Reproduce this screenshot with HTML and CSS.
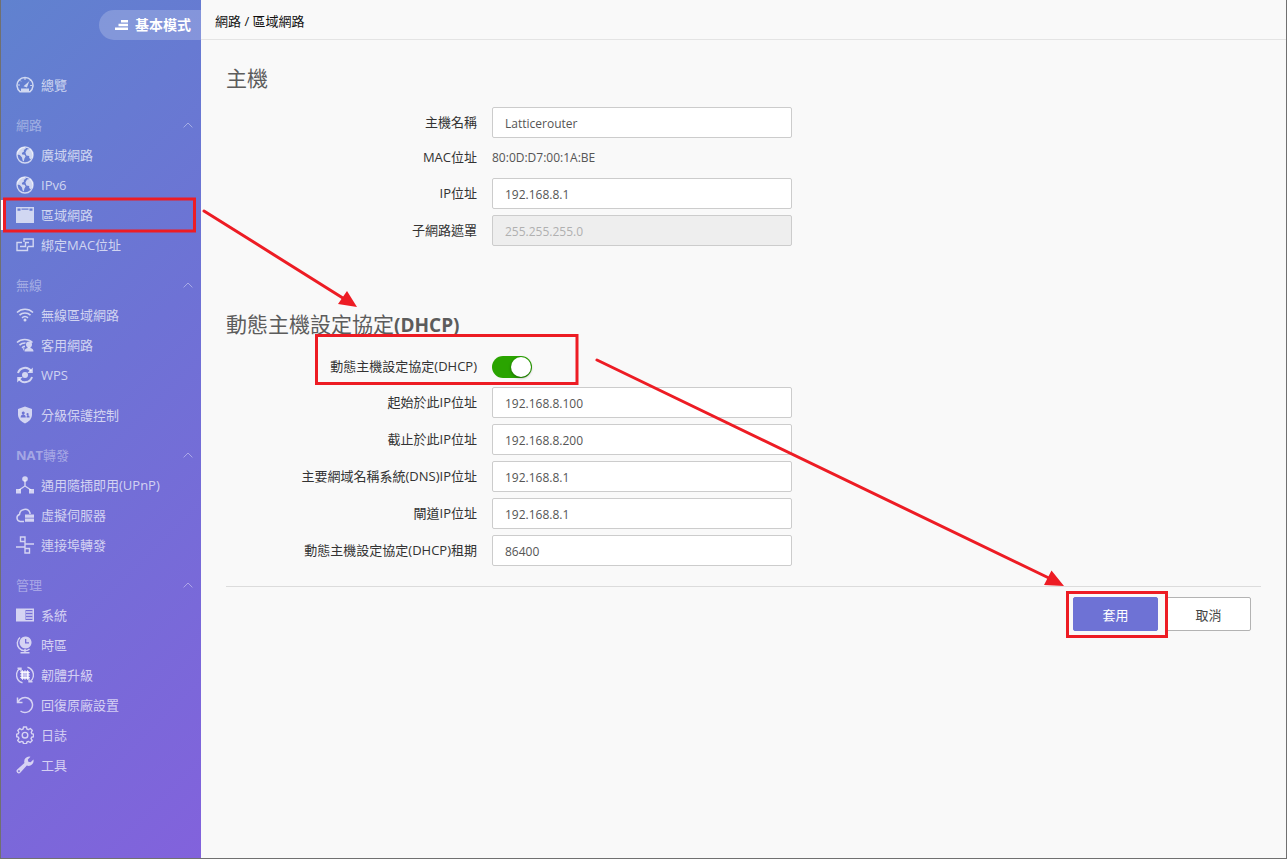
FILE: index.html
```html
<!DOCTYPE html>
<html lang="zh-Hant">
<head>
<meta charset="utf-8">
<meta name="viewport" content="width=device-width, initial-scale=1">
<title>區域網路</title>
<link rel="stylesheet" href="styles.css">
</head>
<body>
<svg class="defs" aria-hidden="true">
  <defs>
    <symbol id="globe" viewBox="0 0 18 18"><circle cx="9" cy="9" r="8" fill="none" stroke="currentColor" stroke-width="1.4"/><path d="M1.500 5 4.500 1.800 8.500 1 10 2.600 7.800 4 8 5.600 5.800 7 6.200 8.400 8.600 8.800 9.600 10.400 8.400 12.400 7.800 15.400 6.600 14.600 6 11.400 3.800 9 1.200 8.500z"/><path d="M11 3.600 14.600 2.800 17 7 16.600 11.500 14.600 13.200 13.200 12 13.200 10 10.400 9.400 9.400 6.400z"/></symbol>
    <symbol id="chevron" viewBox="0 0 10 6"><path d="M.6 5.4 5 1l4.400 4.400" fill="none" stroke="currentColor"/></symbol>
  </defs>
</svg>
<div class="app">
  <aside class="sidebar">
    <button class="mode" type="button">
      <svg width="13" height="10" viewBox="0 0 13 10"><path d="M6 0h7v2.400H6zM3.500 3.800H13v2.400H3.500zM0 7.600h13V10H0z"/></svg>
      <span>基本模式</span>
    </button>
    <nav class="nav">
      <ul class="group">
        <li><a class="item" href="#overview"><svg viewBox="0 0 18 18"><path d="M4.200 15.800A8 8 0 1 1 13.800 15.800z" fill="none" stroke="currentColor" stroke-width="1.500"/><path d="M7.500 10.300 13.200 5.200 11 11.600zM5 12.500h8v2.500H5z"/><path d="M9 2v2M3.800 4.200l1.200 1.200M2 9h2M14.200 9.500h2M14.500 4.200l-1 1" stroke="currentColor"/></svg>總覽</a></li>
      </ul>
      <section>
        <button class="heading" type="button">網路<svg><use href="#chevron"/></svg></button>
        <ul class="group">
          <li><a class="item" href="#wan"><svg><use href="#globe"/></svg>廣域網路</a></li>
          <li><a class="item" href="#ipv6"><svg><use href="#globe"/></svg>IPv6</a></li>
          <li><a class="item active" href="#lan" aria-current="page"><svg viewBox="0 0 18 18"><path fill-rule="evenodd" d="M0 1h18v16H0zM1.500 2.500v2.200h3V2.500zM13.500 2.500v2.200h3V2.500zM5.500 2.500v1.300h7V2.500z"/></svg>區域網路</a></li>
          <li><a class="item" href="#mac"><svg viewBox="0 0 18 18" fill="none" stroke="currentColor" stroke-width="1.400"><path d="M8 6V3h9.200v7.500H12M6 6.500H1v8h10.500V10.500M4 10.500h5.500V6.500H13" /></svg>綁定MAC位址</a></li>
        </ul>
      </section>
      <section>
        <button class="heading" type="button">無線<svg><use href="#chevron"/></svg></button>
        <ul class="group">
          <li><a class="item" href="#wlan"><svg viewBox="0 0 18 18"><path d="M1 6.500a11.500 11.500 0 0 1 16 0M3.500 9.200a8 8 0 0 1 11 0M6 11.800a4.600 4.600 0 0 1 6 0" fill="none" stroke="currentColor" stroke-width="1.600"/><circle cx="9" cy="14" r="1.500"/></svg>無線區域網路</a></li>
          <li><a class="item" href="#guest"><svg viewBox="0 0 18 18"><path d="M1 6.500a11.500 11.500 0 0 1 15.500 0M3.500 9.200a8 8 0 0 1 6-2.200M6 11.800a5 5 0 0 1 3-1.400" fill="none" stroke="currentColor" stroke-width="1.600"/><circle cx="13" cy="8.500" r="3"/><path d="M8.500 15.500q0-3 3-3.500v-1h3v1q3 .5 3 3.500zM6.500 12l2 .5L8 15z"/></svg>客用網路</a></li>
          <li><a class="item" href="#wps"><svg viewBox="0 0 18 18"><circle cx="9" cy="9" r="3"/><path d="M2 7A7.300 7.300 0 0 1 15 5M16 11A7.300 7.300 0 0 1 3 13" fill="none" stroke="currentColor" stroke-width="2"/><path d="M16.800 1.500v5.500h-5.500zM1.200 16.500V11h5.500z"/></svg>WPS</a></li>
        </ul>
      </section>
      <ul class="group">
        <li><a class="item" href="#parental"><svg viewBox="0 0 18 18"><path fill-rule="evenodd" d="M9 0.500 16 3v6q0 5-7 8.500Q2 14 2 9V3zM7.200 5.500a1.500 1.500 0 1 0 .1 0zM4.600 11.500h5.200q-.2-3-2.600-3t-2.600 3zM11.500 7a1.100 1.100 0 1 0 .1 0zM10.500 11.500h3.200q-.2-2.200-1.700-2.200t-1.500 2.200z"/></svg>分級保護控制</a></li>
      </ul>
      <section>
        <button class="heading" type="button"><span><b>NAT</b>轉發</span><svg><use href="#chevron"/></svg></button>
        <ul class="group">
          <li><a class="item" href="#upnp"><svg viewBox="0 0 18 18"><circle cx="9" cy="3" r="2.800"/><path d="M9 4v6l-6 4M9 10l6 4" fill="none" stroke="currentColor" stroke-width="1.400"/><path d="M0 13h5v4.500H0zM13 13h5v4.500h-5z"/></svg>通用隨插即用(UPnP)</a></li>
          <li><a class="item" href="#virtual"><svg viewBox="0 0 18 18"><path d="M8 15.500H4.200a3.600 3.600 0 0 1-.7-7A5.400 5.400 0 0 1 14 7v1" fill="none" stroke="currentColor" stroke-width="1.500"/><path d="M9 8.500h9v3.200H9zM9 12.500h9v3.200H9z"/></svg>虛擬伺服器</a></li>
          <li><a class="item" href="#port"><svg viewBox="0 0 18 18" fill="none" stroke="currentColor" stroke-width="1.400"><path d="M4.500 1h4.500v4.500H4.500zM9 12.500h4.500V17H9zM9 5.500v7M9 8h9M0 11h9"/></svg>連接埠轉發</a></li>
        </ul>
      </section>
      <section>
        <button class="heading" type="button">管理<svg><use href="#chevron"/></svg></button>
        <ul class="group">
          <li><a class="item" href="#system"><svg viewBox="0 0 18 18"><path fill-rule="evenodd" d="M0 2.500h18v13H0zM9.500 4v10h7V4z"/><path d="M10 6h6.500M10 9h6.500M10 12h6.500" stroke="currentColor" stroke-width="1.300"/></svg>系統</a></li>
          <li><a class="item" href="#time"><svg viewBox="0 0 18 18"><path fill-rule="evenodd" d="M9.500.5a6 6 0 1 0 .1 0zM9 3v4.500h4v-1.200h-2.700V3z"/><path d="M4 1.500a7.200 7.200 0 0 0 9.500 11.500M9 13v3.500M4.500 16.700h9" fill="none" stroke="currentColor" stroke-width="1.400"/></svg>時區</a></li>
          <li><a class="item" href="#firmware"><svg viewBox="0 0 18 18"><path fill-rule="evenodd" d="M5 5h8v8H5zM7.500 7.500v3h3v-3z"/><path d="M6.500 4v10M9 4v10M11.500 4v10M4 6.500h10M4 9h10M4 11.500h10" stroke="currentColor" stroke-width="1"/><path d="M6.500 16.800A8 8 0 0 1 4.500 2.200M11.500 1.200A8 8 0 0 1 13.500 15.800M1.500 2.200h3.500v3.500M16.500 15.800h-3.500v-3.500" fill="none" stroke="currentColor" stroke-width="1.400"/></svg>韌體升級</a></li>
          <li><a class="item" href="#reset"><svg viewBox="0 0 18 18" fill="none" stroke="currentColor" stroke-width="1.500"><path d="M1.500 1.500v5h5M2 6.300A7.500 7.500 0 1 1 4.500 15"/></svg>回復原廠設置</a></li>
          <li><a class="item" href="#log"><svg viewBox="0 0 18 18" fill="none" stroke="currentColor" stroke-width="1.400" stroke-linejoin="round"><path d="M7.500 1h3l.4 2 1.600.7L14.300 2.500l2 2-1.100 1.800.6 1.500 1.700.3v2.600l-1.900.5-.6 1.500 1.200 1.800-2 2-1.800-1.100-1.500.6-.4 1.800h-3l-.4-1.800-1.500-.6L3.700 16.400l-2-2 1.200-1.800-.6-1.500L.7 10.700V8.100l1.600-.3.600-1.500L1.800 4.500l2-2 1.700 1.200L7.100 3z"/><circle cx="9" cy="9.200" r="2.800"/></svg>日誌</a></li>
          <li><a class="item" href="#tools"><svg viewBox="0 0 18 18"><path fill-rule="evenodd" d="M14.500.8 11.800 3.500l.5 2.300 2.300.5L17.400 3.500a5 5 0 0 1-6.600 6L4.500 16.600a2.200 2.200 0 0 1-3.300-3.200L8.400 7A5 5 0 0 1 14.500.8zM2.900 14.200a.9.900 0 1 0 .1 0z"/></svg>工具</a></li>
        </ul>
      </section>
    </nav>
  </aside>
  <main class="main">
    <header class="crumbs">網路 / 區域網路</header>
    <form class="content">
      <section class="block">
        <h2>主機</h2>
        <div class="rows">
          <div class="row"><label for="host">主機名稱</label><input id="host" class="field" type="text" value="Latticerouter"></div>
          <div class="row"><span class="name">MAC位址</span><span class="value">80:0D:D7:00:1A:BE</span></div>
          <div class="row"><label for="ip">IP位址</label><input id="ip" class="field" type="text" value="192.168.8.1"></div>
          <div class="row"><label for="mask">子網路遮罩</label><input id="mask" class="field" type="text" value="255.255.255.0" disabled></div>
        </div>
      </section>
      <section class="block">
        <h2>動態主機設定協定<b>(DHCP)</b></h2>
        <div class="rows">
          <div class="row"><label for="dhcp">動態主機設定協定(DHCP)</label><input id="dhcp" class="switch" type="checkbox" role="switch" checked></div>
          <div class="row"><label for="start">起始於此IP位址</label><input id="start" class="field" type="text" value="192.168.8.100"></div>
          <div class="row"><label for="end">截止於此IP位址</label><input id="end" class="field" type="text" value="192.168.8.200"></div>
          <div class="row"><label for="dns">主要網域名稱系統(DNS)IP位址</label><input id="dns" class="field" type="text" value="192.168.8.1"></div>
          <div class="row"><label for="gateway">閘道IP位址</label><input id="gateway" class="field" type="text" value="192.168.8.1"></div>
          <div class="row"><label for="lease">動態主機設定協定(DHCP)租期</label><input id="lease" class="field" type="text" value="86400"></div>
        </div>
      </section>
      <div class="actions">
        <button class="btn primary" type="submit">套用</button>
        <button class="btn" type="button">取消</button>
      </div>
    </form>
  </main>
  <svg class="marks" width="1180" height="650" viewBox="0 0 1180 650" aria-hidden="true">
    <g fill="none" stroke="#ed1c24" stroke-width="3">
      <path d="M4.500 199h190v32h-190zM316.500 335.500h260.500v48H316.500zM1067.500 592.500h99v44h-99z"/>
      <path d="M204 211 346 300M597 360 1053 580" stroke-linecap="round"/>
    </g>
    <path d="M357 307 347 291 338 304zM1064 586 1051.500 570.500 1044 585z" fill="#ed1c24"/>
  </svg>
</div>
</body>
</html>
```
FILE: styles.css
```css
* {
  box-sizing: border-box;
}

body {
  margin: 0;
  font: 13px/20px "Open Sans", "Noto Sans", "Noto Sans CJK TC", sans-serif;
  color: #333;
  background: #f9f9f9;
}

button,
input {
  margin: 0;
  font: inherit;
}

.defs {
  position: absolute;
  width: 0;
  height: 0;
}

.app {
  position: relative;
  display: flex;
  min-height: 100vh;
  border: 1px solid #707070;
  border-top: 0;
}

.sidebar {
  flex: none;
  display: flex;
  flex-direction: column;
  width: 200px;
  padding-top: 10px;
  color: #fff;
  background: linear-gradient(135deg, #6082cf, #6e72d5 45%, #8262dc);
}

.mode {
  display: flex;
  align-items: center;
  align-self: flex-end;
  gap: 7px;
  height: 30px;
  margin-bottom: 30px;
  padding: 0 10px 0 16px;
  border: 0;
  border-radius: 15px 0 0 15px;
  font-size: 14px;
  font-weight: 700;
  color: #fff;
  background: rgba(255, 255, 255, 0.2);
}

.mode svg,
.item svg {
  fill: currentColor;
}

.nav {
  display: flex;
  flex-direction: column;
  gap: 10px;
}

.group {
  margin: 0;
  padding: 0;
  list-style: none;
}

.item {
  display: flex;
  align-items: center;
  gap: 7px;
  height: 30px;
  padding-left: 15px;
  border-left: 0 solid #fff;
  color: rgba(255, 255, 255, 0.7);
  text-decoration: none;
}

.item.active {
  padding-left: 12px;
  border-left-width: 3px;
}

.item svg {
  flex: none;
  width: 18px;
  height: 18px;
}

.item svg[fill="none"] {
  fill: none;
}

.heading {
  display: flex;
  align-items: center;
  justify-content: space-between;
  width: 100%;
  height: 30px;
  padding: 0 8px 0 15px;
  border: 0;
  color: rgba(255, 255, 255, 0.4);
  background: none;
}

.heading b {
  font-weight: 700;
}

.heading svg {
  width: 10px;
  height: 6px;
}

.main {
  flex: 1;
  min-width: 0;
}

.crumbs {
  height: 40px;
  padding: 11px 14px 0;
  border-bottom: 1px solid #e4e4e4;
  color: #111;
}

.content {
  padding: 23px 25px;
}

.block + .block {
  margin-top: 63px;
}

h2 {
  margin: 0 0 14px;
  font-size: 21px;
  font-weight: 400;
  line-height: 30px;
  color: #5c5c5c;
}

h2 b {
  font-size: 19px;
  font-weight: 700;
  line-height: 1;
}

.rows {
  display: flex;
  flex-direction: column;
  gap: 6px;
}

.row {
  display: grid;
  grid-template-columns: 251px minmax(0, 300px);
  column-gap: 15px;
  align-items: center;
  min-height: 28px;
}

.row label,
.name {
  padding-bottom: 2px;
  text-align: right;
}

.value {
  font-size: 12px;
  color: #555;
}

.field {
  width: 100%;
  height: 31px;
  padding: 1px 12px 0;
  border: 1px solid #ccc;
  border-radius: 2px;
  font-size: 12px;
  color: #555;
  background: #fff;
}

.field:disabled {
  color: #b0b0b0;
  background: #eee;
}

.switch {
  appearance: none;
  width: 40px;
  height: 22px;
  padding: 1px;
  border-radius: 11px;
  background: #2aa400;
}

.switch::before {
  content: "";
  display: block;
  width: 20px;
  height: 20px;
  margin-left: 18px;
  border-radius: 50%;
  background: #fff;
  box-shadow: 0 1px 3px rgba(0, 0, 0, 0.4);
}

.actions {
  display: flex;
  justify-content: flex-end;
  gap: 8px;
  margin-top: 20px;
  padding: 10px 10px 0;
  border-top: 1px solid #dcdcdc;
}

.btn {
  width: 85px;
  height: 34px;
  padding: 2px 0 0;
  border: 1px solid #b3b3b3;
  border-radius: 2px;
  color: #444;
  background: #fff;
}

.btn.primary {
  border-color: #6e72d5;
  color: #fff;
  background: #6e72d5;
}

.marks {
  position: absolute;
  top: 0;
  left: -1px;
  pointer-events: none;
}
```
